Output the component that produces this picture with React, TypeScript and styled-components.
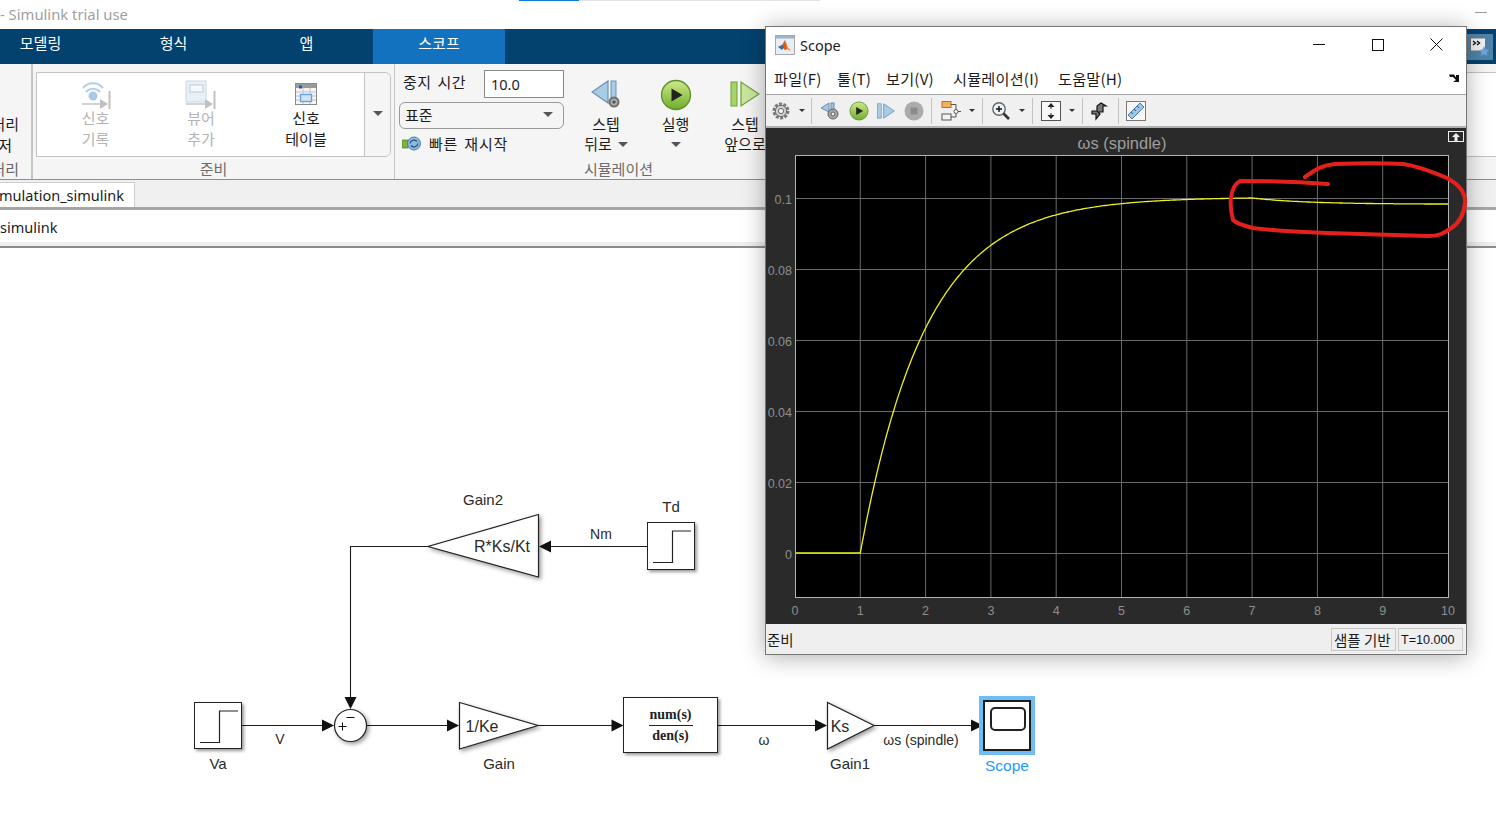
import styled, { createGlobalStyle } from "styled-components";

const KO = `"Noto Sans CJK KR", "Noto Sans", sans-serif`;
const UI = `"Noto Sans", "Noto Sans CJK KR", sans-serif`;
const ARIAL = `"Liberation Sans", Arial, sans-serif`;

const GlobalStyle = createGlobalStyle`
  html, body {
    margin: 0;
    padding: 0;
    background: #ffffff;
    overflow: hidden;
  }
  * { box-sizing: border-box; }
`;

/* ---------- main window ---------- */

const Page = styled.div`
  position: relative;
  width: 1496px;
  height: 822px;
  overflow: hidden;
  display: flex;
  flex-direction: column;
  font-family: ${KO};
  color: #1c1c1c;
`;

const TitleBar = styled.div`
  position: relative;
  flex: 0 0 29px;
  min-height: 0;
  display: flex;
  align-items: center;
  justify-content: space-between;
  background: #fff;
  color: #a0a0a0;
  font-family: ${UI};
  font-size: 14.8px;
  padding: 0 9px 2px 0;
`;

const LoadStrip = styled.div`
  position: absolute;
  left: 519px;
  top: 0;
  width: 301px;
  height: 1px;
  background: linear-gradient(to right, #0a7ad6 60px, #e4e4e4 60px);
`;

const CaptionDash = styled.span`
  width: 12px;
  height: 1px;
  background: #9a9a9a;
  margin-top: -3px;
`;

const TabBar = styled.div`
  flex: 0 0 35px;
  display: flex;
  background: #03426f;
  color: #fff;
  font-size: 15px;
`;

const RibbonTab = styled.div<{ $active?: boolean; $first?: boolean }>`
  width: ${(p) => (p.$active ? 132 : 133)}px;
  margin-left: ${(p) => (p.$first ? -26 : 0)}px;
  display: flex;
  align-items: flex-start;
  justify-content: center;
  padding-top: 3px;
  background: ${(p) => (p.$active ? "#1272bf" : "transparent")};
`;

const TabSpacer = styled.div`
  flex: 1;
`;

const QuickBtn = styled.div`
  width: 26px;
  height: 26px;
  margin: 5px 3px 0 0;
  background: #4f83a8;
  display: flex;
  align-items: center;
  justify-content: center;
`;

const Ribbon = styled.div`
  flex: 0 0 116px;
  min-height: 0;
  display: flex;
  background: #f5f5f5;
  border-bottom: 1px solid #8e8e8e;
`;

const CutSection = styled.div`
  flex: 0 0 33px;
  display: flex;
  flex-direction: column;
  align-items: flex-end;
  overflow: hidden;
  border-right: 2px solid #c4c4c4;
  font-size: 15px;
  line-height: 21px;
  padding-top: 49px;
`;

const CutLine = styled.div<{ $pad: number; $muted?: boolean }>`
  white-space: nowrap;
  padding-right: ${(p) => p.$pad}px;
  margin-top: ${(p) => (p.$muted ? 3 : 0)}px;
  color: ${(p) => (p.$muted ? "#666" : "#1c1c1c")};
`;

const Section = styled.div<{ $w: number }>`
  flex: 0 0 ${(p) => p.$w}px;
  min-height: 0;
  display: flex;
  flex-direction: column;
  border-right: 1px solid #c4c4c4;
`;

const SectionBody = styled.div`
  flex: 0 0 93px;
  display: flex;
`;

const SectionLabel = styled.div`
  flex: 1;
  min-height: 0;
  text-align: center;
  color: #6c6c6c;
  font-size: 15px;
  line-height: 23px;
`;

const Gallery = styled.div`
  margin: 8px 3px 0 3px;
  flex: 1;
  height: 85px;
  display: flex;
  background: #fff;
  border: 1px solid #c3c3c3;
  border-radius: 0 6px 6px 0;
`;

const GalleryItem = styled.div<{ $w: number; $disabled?: boolean }>`
  flex: 0 0 ${(p) => p.$w}px;
  display: flex;
  flex-direction: column;
  align-items: center;
  padding-top: 7px;
  font-size: 15px;
  line-height: 21px;
  color: ${(p) => (p.$disabled ? "#b4b4b4" : "#1c1c1c")};
`;

const GalleryIcon = styled.div`
  height: 27px;
`;

const GalleryMore = styled.div`
  flex: 1;
  border-left: 1px solid #c3c3c3;
  background: #f5f5f5;
  border-radius: 0 6px 6px 0;
  display: flex;
  justify-content: center;
  padding-top: 38px;
`;

const Caret = styled.span<{ $size?: number; $color?: string }>`
  display: inline-block;
  width: 0;
  height: 0;
  border-left: ${(p) => p.$size ?? 5}px solid transparent;
  border-right: ${(p) => p.$size ?? 5}px solid transparent;
  border-top: ${(p) => p.$size ?? 5}px solid ${(p) => p.$color ?? "#555"};
`;

const SimControls = styled.div`
  flex: 0 0 165px;
  margin-left: 4px;
  display: flex;
  flex-direction: column;
`;

const StopRow = styled.div`
  display: flex;
  align-items: flex-start;
  justify-content: space-between;
  height: 28px;
  margin-top: 6px;
  padding-left: 4px;
  font-size: 15px;
  line-height: 24px;
  word-spacing: 2px;
  letter-spacing: 0.5px;
`;

const StopInput = styled.div`
  width: 80px;
  height: 28px;
  background: #fff;
  border: 1px solid #8a8a8a;
  font-family: ${UI};
  font-size: 14.5px;
  line-height: 26px;
  letter-spacing: 0;
  padding-left: 6px;
`;

const ModeSelect = styled.div`
  margin-top: 4px;
  height: 27px;
  border: 1px solid #9a9a9a;
  border-radius: 6px;
  display: flex;
  align-items: center;
  justify-content: space-between;
  padding: 0 10px 3px 5px;
  font-size: 15px;
`;

const FastRestart = styled.div`
  display: flex;
  align-items: center;
  gap: 7px;
  margin: 4px 0 0 3px;
  height: 20px;
  font-size: 15px;
  word-spacing: 2px;
  letter-spacing: 0.8px;
`;

const SimButton = styled.div<{ $w: number }>`
  flex: 0 0 ${(p) => p.$w}px;
  display: flex;
  flex-direction: column;
  align-items: center;
  font-size: 15px;
  line-height: 20px;
  padding-top: 15px;
`;

const SimIcon = styled.div`
  height: 32px;
  margin-bottom: 3px;
`;

const SimLine = styled.div`
  display: flex;
  align-items: center;
  gap: 6px;
  height: 20px;
  white-space: nowrap;
`;

const RibbonRest = styled.div`
  flex: 1;
  padding-top: 8px;
`;

const RestGallery = styled.div`
  height: 85px;
  background: #fff;
  border-top: 1px solid #c3c3c3;
  border-bottom: 1px solid #c3c3c3;
`;

const DocTabs = styled.div`
  flex: 0 0 30px;
  display: flex;
  align-items: flex-end;
  background: #f0f0f0;
  border-bottom: 3px solid #a6a6a6;
`;

const DocTab = styled.div`
  width: 135px;
  height: 25px;
  background: #fff;
  border: 1px solid #cfcfcf;
  border-left: none;
  border-bottom: none;
  overflow: hidden;
  display: flex;
  justify-content: flex-end;
  padding-right: 10px;
  font-family: ${UI};
  font-size: 14.5px;
  line-height: 24px;
  white-space: nowrap;
`;

const Breadcrumb = styled.div`
  flex: 0 0 36px;
  min-height: 0;
  background: #fff;
  border-bottom: 4px solid #efefef;
  font-family: ${UI};
  font-size: 14.5px;
  line-height: 35px;
  white-space: nowrap;
`;

const Canvas = styled.div`
  position: relative;
  flex: 1;
  background: #fff;
  border-top: 2px solid #8c8c8c;
  font-family: ${ARIAL};
`;

/* ---------- diagram, all y values are page y ---------- */

const CANVAS_TOP = 248;

const Wires = styled.svg`
  position: absolute;
  left: 0;
  top: 0;
  width: 1496px;
  height: 574px;
`;

const Block = styled.div<{ $x: number; $y: number; $w: number; $h: number }>`
  position: absolute;
  left: ${(p) => p.$x}px;
  top: ${(p) => p.$y - CANVAS_TOP}px;
  width: ${(p) => p.$w}px;
  height: ${(p) => p.$h}px;
  background: #fff;
  border: 1px solid #222;
  box-shadow: 2px 2px 3px rgba(0, 0, 0, 0.4);
`;

const Fraction = styled(Block)`
  display: flex;
  flex-direction: column;
  align-items: center;
  justify-content: center;
  font-family: "Liberation Serif", serif;
  font-weight: 700;
  font-size: 14px;
  line-height: 18px;
  color: #222;
`;

const Numerator = styled.div`
  width: 44px;
  text-align: center;
  border-bottom: 1px solid #222;
  padding-bottom: 1px;
  margin-bottom: 1px;
`;

const ScopeBlock = styled(Block)`
  border: 2px solid #1b1b1b;
  outline: 4px solid #6fbdf4;
  box-shadow: none;
`;

const ScopeScreen = styled.div`
  position: absolute;
  left: 5px;
  top: 5px;
  width: 36px;
  height: 24px;
  border: 2px solid #222;
  border-radius: 5px;
`;

const Label = styled.div<{ $x: number; $y: number; $blue?: boolean; $size?: number }>`
  position: absolute;
  left: ${(p) => p.$x}px;
  top: ${(p) => p.$y - CANVAS_TOP - 1}px;
  transform: translate(-50%, -50%);
  white-space: nowrap;
  font-size: ${(p) => p.$size ?? 15}px;
  color: ${(p) => (p.$blue ? "#1a9bff" : "#2a2a2a")};
`;

/* ---------- scope window ---------- */

const ScopeWindow = styled.div`
  position: absolute;
  left: 765px;
  top: 26px;
  width: 702px;
  height: 629px;
  display: flex;
  flex-direction: column;
  background: #fff;
  border: 1px solid #767676;
  box-shadow: 0 2px 22px rgba(0, 0, 0, 0.32);
`;

const ScopeTitle = styled.div`
  flex: 0 0 37px;
  display: flex;
  align-items: center;
  padding: 0 0 2px 9px;
  font-family: ${UI};
  font-size: 14.5px;
`;

const ScopeTitleText = styled.span`
  margin-left: 5px;
  flex: 1;
`;

const WinBtn = styled.div`
  width: 59px;
  height: 34px;
  display: flex;
  align-items: center;
  justify-content: center;
`;

const MenuRow = styled.div`
  flex: 0 0 31px;
  min-height: 0;
  display: flex;
  align-items: center;
  padding: 0 6px 3px 8px;
  font-size: 15.2px;
  letter-spacing: 0.2px;
  border-bottom: 1px solid #a8a8a8;
`;

const MenuItem = styled.span<{ $w: number }>`
  flex: 0 0 ${(p) => p.$w}px;
  white-space: nowrap;
`;

const MenuSpacer = styled.div`
  flex: 1;
`;

const Toolbar = styled.div`
  flex: 0 0 33px;
  display: flex;
  align-items: center;
  background: #f0f0f0;
  border-bottom: 2px solid #b0b0b0;
`;

const ToolSlot = styled.div<{ $w: number }>`
  flex: 0 0 ${(p) => p.$w}px;
  display: flex;
  align-items: center;
  justify-content: center;
`;

const ToolSep = styled.div<{ $w?: number }>`
  flex: 0 0 ${(p) => p.$w ?? 8}px;
  height: 26px;
  background: linear-gradient(#c4c4c4, #c4c4c4) center / 1px 100% no-repeat;
`;

const PlotArea = styled.div`
  position: relative;
  flex: 1;
  min-height: 0;
  display: flex;
  flex-direction: column;
  background: #2a2a2a;
`;

const PlotTitle = styled.div`
  flex: 0 0 27px;
  min-height: 0;
  text-align: center;
  padding-left: 12px;
  font-family: ${ARIAL};
  font-size: 16.5px;
  line-height: 31px;
  color: #9e9e9e;
`;

const ExpandBtn = styled.div`
  position: absolute;
  right: 2px;
  top: 3px;
  width: 16px;
  height: 11px;
  border: 1px solid #eee;
  display: flex;
  align-items: center;
  justify-content: center;
`;

const ChartSvg = styled.svg`
  display: block;
  width: 700px;
  height: 469px;
  flex: 0 0 469px;
`;

const TickText = styled.text`
  font-family: ${ARIAL};
  font-size: 12.5px;
  fill: #8e8e8e;
`;

const StatusBar = styled.div`
  flex: 0 0 30px;
  display: flex;
  align-items: center;
  background: #efefef;
  padding: 0 3px 0 1px;
  font-size: 14.5px;
`;

const StatusText = styled.div`
  flex: 1;
`;

const StatusCell = styled.div<{ $mono?: boolean }>`
  width: 65px;
  height: 23px;
  margin-left: 2px;
  border: 1px solid #c6c6c6;
  padding-left: 2px;
  line-height: 22px;
  white-space: nowrap;
  font-family: ${(p) => (p.$mono ? ARIAL : KO)};
  font-size: ${(p) => (p.$mono ? 12.6 : 14.5)}px;
  color: ${(p) => (p.$mono ? "#0c1230" : "#1c1c1c")};
`;

const Annotation = styled.svg`
  position: absolute;
  left: 0;
  top: 0;
  width: 1496px;
  height: 822px;
  pointer-events: none;
`;

/* ---------- chart ---------- */

const xOf = (t: number) => 795 + t * 65.3;
const yOf = (v: number) => 554 - v * 3550;

const response = (t: number) => {
  if (t <= 1) return 0;
  const rise = 0.1 * (1 - Math.exp(-(t - 1) / 1.0));
  if (t <= 7) return rise / 0.9975;
  return 0.1 - 0.00175 * (1 - Math.exp(-(t - 7) * 1.2));
};

const curve = Array.from({ length: 401 }, (_, i) => {
  const t = i / 40;
  return `${xOf(t).toFixed(1)},${(yOf(response(t)) - 1).toFixed(1)}`;
}).join(" ");

const xTicks = [0, 1, 2, 3, 4, 5, 6, 7, 8, 9, 10];
const yTicks = [
  { v: 0, s: "0" },
  { v: 0.02, s: "0.02" },
  { v: 0.04, s: "0.04" },
  { v: 0.06, s: "0.06" },
  { v: 0.08, s: "0.08" },
  { v: 0.1, s: "0.1" },
];

const Chart = () => (
  <ChartSvg viewBox="766 155 700 469">
    <rect x={795} y={155} width={654} height={443} fill="#000" />
    {xTicks.slice(1, 10).map((t) => (
      <line key={t} x1={xOf(t)} x2={xOf(t)} y1={155} y2={597} stroke="#6a6a6a" />
    ))}
    {yTicks.map((tick) => (
      <line key={tick.s} x1={795} x2={1448} y1={yOf(tick.v) - 0.5} y2={yOf(tick.v) - 0.5} stroke="#6a6a6a" />
    ))}
    <polyline points={curve} fill="none" stroke="#f0f020" strokeWidth={1.3} />
    <rect x={795.5} y={155.5} width={653} height={442} fill="none" stroke="#b4b4b4" />
    {xTicks.map((t) => (
      <TickText key={t} x={xOf(t)} y={615} textAnchor="middle">
        {t}
      </TickText>
    ))}
    {yTicks.map((tick) => (
      <TickText key={tick.s} x={792} y={yOf(tick.v) + 5} textAnchor="end">
        {tick.s}
      </TickText>
    ))}
  </ChartSvg>
);

/* ---------- icons ---------- */

const StepSignal = () => (
  <svg width="46" height="46" viewBox="0 0 46 46">
    <path d="M5 39.5H24.5V8H43" fill="none" stroke="#222" strokeWidth="1.2" />
  </svg>
);

const MatlabLogo = () => (
  <svg width="20" height="20" viewBox="0 0 20 20">
    <rect x="0.5" y="0.5" width="19" height="19" fill="#e8eef3" stroke="#a8a8a8" />
    <rect x="1" y="1" width="18" height="2.5" fill="#9fb4c6" />
    <path d="M3 12l4-2 3-5 3 8 3 3-4-2-2 1-3-3z" fill="#e2571e" />
    <path d="M3 12l4-2 2 2-2 3z" fill="#2f6fb3" />
    <path d="M10 5l3 8 3 3-4-2z" fill="#f4a11f" />
  </svg>
);

const SignalLogIcon = () => (
  <svg width="32" height="30" viewBox="0 0 32 30">
    <path d="M3 8a13 13 0 0 1 20 0M6 12a9 9 0 0 1 14 0" fill="none" stroke="#b6cfe6" strokeWidth="2" />
    <circle cx="13" cy="16" r="4.5" fill="#a9c9e6" />
    <path d="M2 24H20" stroke="#c4c4c4" strokeWidth="1.5" />
    <path d="M20 19l8 5-8 5z" fill="#c0c0c0" />
    <path d="M29.5 11V29" stroke="#c0c0c0" strokeWidth="2" />
  </svg>
);

const ViewerIcon = () => (
  <svg width="32" height="30" viewBox="0 0 32 30">
    <rect x="1" y="1" width="20" height="21" fill="#e8f0f7" stroke="#cfd8e0" />
    <rect x="5" y="5" width="13" height="7" fill="#f6fafd" stroke="#b6cbe0" />
    <path d="M1 24H20" stroke="#c4c4c4" strokeWidth="1.5" />
    <path d="M20 19l8 5-8 5z" fill="#c0c0c0" />
    <path d="M29.5 11V29" stroke="#c0c0c0" strokeWidth="2" />
  </svg>
);

const SignalTableIcon = () => (
  <svg width="24" height="26" viewBox="0 -2 24 26">
    <rect x="1.5" y="1.5" width="21" height="21" fill="#f4f4f4" stroke="#8a8a8a" />
    <rect x="2" y="2" width="20" height="4" fill="#9a9a9a" />
    <path d="M2 10H22M2 14H22M2 18H22M9 6V22M16 6V22" stroke="#c2c2c2" />
    <rect x="5" y="3.5" width="3" height="3" fill="#1b5fb4" />
    <rect x="6.5" y="12.5" width="11" height="7" fill="#cfe2f6" stroke="#5fa0e6" strokeWidth="1.3" />
  </svg>
);

const FastRestartIcon = () => (
  <svg width="20" height="15" viewBox="0 0 20 15">
    <rect x="0" y="4" width="6" height="8" fill="#7cb53c" stroke="#4e7d22" strokeWidth="0.7" />
    <circle cx="12" cy="7.5" r="6.5" fill="#8db8dc" stroke="#4f7ea8" />
    <path d="M8 7.5a4 4 0 0 1 7-2M16 7.5a4 4 0 0 1-7 2" fill="none" stroke="#1f4f7c" strokeWidth="1.2" />
  </svg>
);

const StepBackIcon = ({ size = 30 }: { size?: number }) => (
  <svg width={size} height={size} viewBox="0 0 30 30">
    <path d="M17 2v22L1 13z" fill="#a8cbe6" stroke="#6c93b4" strokeWidth="1.2" />
    <rect x="20" y="2" width="5" height="18" fill="#a8cbe6" stroke="#6c93b4" />
    <circle cx="23" cy="23" r="5.5" fill="#6e6e6e" />
    <circle cx="23" cy="23" r="3.5" fill="#ababab" />
    <circle cx="23" cy="23" r="1.6" fill="#4c4c4c" />
  </svg>
);

const RunIcon = ({ size = 32 }: { size?: number }) => (
  <svg width={size} height={size} viewBox="0 0 32 32">
    <defs>
      <linearGradient id="runFill" x1="0" y1="0" x2="0" y2="1">
        <stop offset="0" stopColor="#cfe88a" />
        <stop offset="1" stopColor="#6fae2c" />
      </linearGradient>
    </defs>
    <circle cx="16" cy="16" r="14.5" fill="url(#runFill)" stroke="#5b8f2a" strokeWidth="1.3" />
    <path d="M11.5 9.5L22.5 16 11.5 22.5z" fill="#222" />
  </svg>
);

const StepForwardIcon = ({ size = 30, green = true }: { size?: number; green?: boolean }) => (
  <svg width={size} height={size} viewBox="0 0 30 30">
    <rect x="1" y="3" width="6" height="24" fill={green ? "#a6d468" : "#a8cbe6"} stroke={green ? "#6ea03a" : "#5f8cb4"} />
    <path d="M11 3v24l18-12z" fill={green ? "#c9e69a" : "#a8cbe6"} stroke={green ? "#6ea03a" : "#5f8cb4"} strokeWidth="1.2" />
  </svg>
);

const GearIcon = () => (
  <svg width="20" height="20" viewBox="0 0 20 20">
    <circle cx="10" cy="10" r="7" fill="none" stroke="#7a7a7a" strokeWidth="3" strokeDasharray="3 1.4" />
    <circle cx="10" cy="10" r="5.6" fill="#d0d0d0" stroke="#6a6a6a" />
    <circle cx="10" cy="10" r="2.6" fill="#f0f0f0" stroke="#6a6a6a" />
  </svg>
);

const RewindGearIcon = () => (
  <svg width="20" height="20" viewBox="0 0 20 20">
    <path d="M9 2v9L1 7z" fill="#a8c6e0" stroke="#6a8cae" />
    <rect x="11" y="2" width="3" height="7" fill="#a8c6e0" stroke="#6a8cae" />
    <circle cx="13" cy="13" r="5" fill="#a8a8a8" stroke="#5e5e5e" />
    <circle cx="13" cy="13" r="2" fill="#efefef" stroke="#5e5e5e" />
  </svg>
);

const StopIcon = () => (
  <svg width="20" height="20" viewBox="0 0 20 20">
    <circle cx="10" cy="10" r="9.5" fill="#ababab" />
    <rect x="6.5" y="6.5" width="7" height="7" fill="#8b8b8b" />
  </svg>
);

const BlocksIcon = () => (
  <svg width="22" height="22" viewBox="0 0 22 22">
    <rect x="3" y="1.5" width="9" height="6" fill="#f1b35c" stroke="#c76a12" />
    <rect x="3" y="14" width="9" height="6" fill="#f4f4f4" stroke="#555" />
    <path d="M12 4.5H17V10M12 17H17V13" fill="none" stroke="#555" />
    <circle cx="17" cy="11.5" r="2" fill="#fff" stroke="#555" />
    <path d="M19 11.5H22" stroke="#555" />
  </svg>
);

const ZoomIcon = () => (
  <svg width="20" height="20" viewBox="0 0 20 20">
    <circle cx="8" cy="8" r="6.2" fill="#eef3f8" stroke="#666" strokeWidth="1.4" />
    <path d="M5 8h6M8 5v6" stroke="#111" strokeWidth="1.4" />
    <path d="M12.5 12.5L18 18" stroke="#333" strokeWidth="2.6" />
  </svg>
);

const FitIcon = () => (
  <svg width="20" height="20" viewBox="0 0 20 20">
    <rect x="0.5" y="0.5" width="19" height="19" fill="#f8f8f8" stroke="#555" />
    <path d="M10 2l3.5 4h-7zM10 18l3.5-4h-7z" fill="#222" />
    <path d="M10 6v2M10 12v2" stroke="#222" />
  </svg>
);

const SignalEdgeIcon = () => (
  <svg width="20" height="20" viewBox="0 0 20 20">
    <path d="M2 10h5V5l4-3 5 3h-3v6H8l2 2-4 5 0-5H2z" fill="#777" stroke="#111" strokeWidth="1.2" />
  </svg>
);

const RulerIcon = () => (
  <svg width="20" height="20" viewBox="0 0 20 20">
    <rect x="0.5" y="0.5" width="19" height="19" fill="#f7f7f7" stroke="#777" />
    <path d="M2 14L14 2l4 4L6 18z" fill="#9cc4e6" stroke="#4f7ea8" />
    <path d="M5 11l2 2M8 8l2 2M11 5l2 2" stroke="#2f5f8c" />
  </svg>
);

const UndockArrow = () => (
  <svg width="12" height="10" viewBox="0 0 12 10">
    <path d="M1 1.5h5l2 3V2l3 0v7H5l3-2-3-3H2z" fill="#111" />
  </svg>
);

const ExpandArrow = () => (
  <svg width="10" height="8" viewBox="0 0 10 8">
    <path d="M5 0l4 4H6.5v4h-3V4H1z" fill="#eee" />
  </svg>
);

const QuickIcon = () => (
  <svg width="20" height="20" viewBox="0 0 20 20">
    <rect x="0.5" y="1" width="15" height="13" fill="#eef2f5" stroke="#777" />
    <path d="M3 4l2.5 2L3 8M7 4l2.5 2L7 8" fill="none" stroke="#111" strokeWidth="1.4" />
    <path d="M14 9l1.6 3.4 3.6.5-2.6 2.5.6 3.6-3.2-1.7-3.2 1.7.6-3.6-2.6-2.5 3.6-.5z" fill="#6ea6d8" />
  </svg>
);

const Arrow = ({ d }: { d: string }) => <path d={d} fill="#111" />;

const Wiring = () => (
  <Wires viewBox={`0 ${CANVAS_TOP} 1496 574`}>
    <g fill="none" stroke="#1a1a1a" strokeWidth="1.1">
      <path d="M647 546.5H550" />
      <path d="M428 546.5H350.5V698" />
      <path d="M242 725.5H324" />
      <path d="M367 725.5H450" />
      <path d="M538 725.5H614" />
      <path d="M718 725.5H817" />
      <path d="M874 725.5H973" />
    </g>
    <Arrow d="M539 546.5l12-6v12z" />
    <Arrow d="M350.5 709l-6-12h12z" />
    <Arrow d="M334 725.5l-12-6v12z" />
    <Arrow d="M459 725.5l-12-6v12z" />
    <Arrow d="M623.5 725.5l-12-6v12z" />
    <Arrow d="M827 725.5l-12-6v12z" />
    <Arrow d="M983 725.5l-12-6v12z" />
    <g fill="#fff" stroke="#222" strokeWidth="1.2" style={{ filter: "drop-shadow(2px 2px 2px rgba(0,0,0,.4))" }}>
      <path d="M538.5 514.5V577L428 546.5z" />
      <path d="M459.5 702.5V749L538 725.5z" />
      <path d="M827.5 702.5V749L874 725.5z" />
      <circle cx="350.5" cy="725.5" r="16" />
    </g>
    <path d="M338.5 726.5h8M342.5 722.5v8M346.5 717.5h8" stroke="#111" strokeWidth="1" />
  </Wires>
);

const App = () => (
  <Page>
    <GlobalStyle />
    <TitleBar>
      <LoadStrip />
      <span>- Simulink trial use</span>
      <CaptionDash />
    </TitleBar>
    <TabBar>
      <RibbonTab $first>모델링</RibbonTab>
      <RibbonTab>형식</RibbonTab>
      <RibbonTab>앱</RibbonTab>
      <RibbonTab $active>스코프</RibbonTab>
      <TabSpacer />
      <QuickBtn>
        <QuickIcon />
      </QuickBtn>
    </TabBar>
    <Ribbon>
      <CutSection>
        <CutLine $pad={12}>처리</CutLine>
        <CutLine $pad={19}>저</CutLine>
        <CutLine $pad={12} $muted>
          처리
        </CutLine>
      </CutSection>
      <Section $w={362}>
        <SectionBody>
          <Gallery>
            <GalleryItem $w={117} $disabled>
              <GalleryIcon>
                <SignalLogIcon />
              </GalleryIcon>
              <span>신호</span>
              <span>기록</span>
            </GalleryItem>
            <GalleryItem $w={94} $disabled>
              <GalleryIcon>
                <ViewerIcon />
              </GalleryIcon>
              <span>뷰어</span>
              <span>추가</span>
            </GalleryItem>
            <GalleryItem $w={116}>
              <GalleryIcon>
                <SignalTableIcon />
              </GalleryIcon>
              <span>신호</span>
              <span>테이블</span>
            </GalleryItem>
            <GalleryMore>
              <Caret />
            </GalleryMore>
          </Gallery>
        </SectionBody>
        <SectionLabel>준비</SectionLabel>
      </Section>
      <Section $w={448}>
        <SectionBody>
          <SimControls>
            <StopRow>
              <span>중지 시간</span>
              <StopInput>10.0</StopInput>
            </StopRow>
            <ModeSelect>
              <span>표준</span>
              <Caret />
            </ModeSelect>
            <FastRestart>
              <FastRestartIcon />
              <span>빠른 재시작</span>
            </FastRestart>
          </SimControls>
          <SimButton $w={84}>
            <SimIcon>
              <StepBackIcon />
            </SimIcon>
            <span>스텝</span>
            <SimLine>
              뒤로 <Caret />
            </SimLine>
          </SimButton>
          <SimButton $w={55}>
            <SimIcon>
              <RunIcon />
            </SimIcon>
            <span>실행</span>
            <SimLine>
              <Caret />
            </SimLine>
          </SimButton>
          <SimButton $w={84}>
            <SimIcon>
              <StepForwardIcon />
            </SimIcon>
            <span>스텝</span>
            <SimLine>앞으로</SimLine>
          </SimButton>
        </SectionBody>
        <SectionLabel>시뮬레이션</SectionLabel>
      </Section>
      <RibbonRest>
        <RestGallery />
      </RibbonRest>
    </Ribbon>
    <DocTabs>
      <DocTab>motor_simulation_simulink</DocTab>
    </DocTabs>
    <Breadcrumb>simulink</Breadcrumb>
    <Canvas>
      <Wiring />
      <Block $x={647} $y={522} $w={48} $h={48}>
        <StepSignal />
      </Block>
      <Block $x={194} $y={702} $w={48} $h={47}>
        <StepSignal />
      </Block>
      <Fraction $x={623} $y={697} $w={95} $h={56}>
        <Numerator>num(s)</Numerator>
        <div>den(s)</div>
      </Fraction>
      <ScopeBlock $x={983} $y={700} $w={48} $h={51}>
        <ScopeScreen />
      </ScopeBlock>
      <Label $x={483} $y={500}>Gain2</Label>
      <Label $x={671} $y={507}>Td</Label>
      <Label $x={601} $y={535} $size={14}>Nm</Label>
      <Label $x={502} $y={548} $size={16}>R*Ks/Kt</Label>
      <Label $x={280} $y={740} $size={14}>V</Label>
      <Label $x={218} $y={764}>Va</Label>
      <Label $x={482} $y={728} $size={16}>1/Ke</Label>
      <Label $x={499} $y={764}>Gain</Label>
      <Label $x={764} $y={741} $size={14}>ω</Label>
      <Label $x={840} $y={728} $size={16}>Ks</Label>
      <Label $x={850} $y={764}>Gain1</Label>
      <Label $x={921} $y={741} $size={14}>ωs (spindle)</Label>
      <Label $x={1007} $y={767} $blue $size={15.5}>Scope</Label>
    </Canvas>
    <ScopeWindow>
      <ScopeTitle>
        <MatlabLogo />
        <ScopeTitleText>Scope</ScopeTitleText>
        <WinBtn>
          <svg width="12" height="12" viewBox="0 0 12 12">
            <path d="M0 5.5H12" stroke="#111" />
          </svg>
        </WinBtn>
        <WinBtn>
          <svg width="12" height="12" viewBox="0 0 12 12">
            <rect x="0.5" y="0.5" width="11" height="11" fill="none" stroke="#111" />
          </svg>
        </WinBtn>
        <WinBtn>
          <svg width="13" height="13" viewBox="0 0 13 13">
            <path d="M0.5 0.5L12.5 12.5M12.5 0.5L0.5 12.5" stroke="#111" />
          </svg>
        </WinBtn>
      </ScopeTitle>
      <MenuRow>
        <MenuItem $w={63}>파일(F)</MenuItem>
        <MenuItem $w={49}>툴(T)</MenuItem>
        <MenuItem $w={67}>보기(V)</MenuItem>
        <MenuItem $w={105}>시뮬레이션(I)</MenuItem>
        <MenuItem $w={70}>도움말(H)</MenuItem>
        <MenuSpacer />
        <UndockArrow />
      </MenuRow>
      <Toolbar>
        <ToolSlot $w={30}><GearIcon /></ToolSlot>
        <ToolSlot $w={12}><Caret $size={3} $color="#333" /></ToolSlot>
        <ToolSep $w={6} />
        <ToolSlot $w={31}><RewindGearIcon /></ToolSlot>
        <ToolSlot $w={27}><RunIcon size={20} /></ToolSlot>
        <ToolSlot $w={28}><StepForwardIcon size={18} green={false} /></ToolSlot>
        <ToolSlot $w={28}><StopIcon /></ToolSlot>
        <ToolSep $w={6} />
        <ToolSlot $w={32}><BlocksIcon /></ToolSlot>
        <ToolSlot $w={12}><Caret $size={3} $color="#333" /></ToolSlot>
        <ToolSep />
        <ToolSlot $w={30}><ZoomIcon /></ToolSlot>
        <ToolSlot $w={12}><Caret $size={3} $color="#333" /></ToolSlot>
        <ToolSep />
        <ToolSlot $w={30}><FitIcon /></ToolSlot>
        <ToolSlot $w={12}><Caret $size={3} $color="#333" /></ToolSlot>
        <ToolSep />
        <ToolSlot $w={28}><SignalEdgeIcon /></ToolSlot>
        <ToolSep />
        <ToolSlot $w={28}><RulerIcon /></ToolSlot>
      </Toolbar>
      <PlotArea>
        <PlotTitle>ωs (spindle)</PlotTitle>
        <ExpandBtn>
          <ExpandArrow />
        </ExpandBtn>
        <Chart />
      </PlotArea>
      <StatusBar>
        <StatusText>준비</StatusText>
        <StatusCell>샘플 기반</StatusCell>
        <StatusCell $mono>T=10.000</StatusCell>
      </StatusBar>
    </ScopeWindow>
    <Annotation viewBox="0 0 1496 822">
      <path
        d="M1305 177C1315 170 1322 165 1335 164C1360 163 1385 163 1403 164C1418 166 1435 173 1447 178C1458 184 1466 192 1465 203C1464 215 1458 224 1450 229C1443 234 1438 236 1428 236C1395 235 1360 234 1327 233C1300 232 1275 231 1253 228C1245 226 1237 224 1233 220C1231 212 1230 205 1231 198C1232 190 1234 184 1240 181C1268 181 1300 182 1328 184"
        fill="none"
        stroke="#e3201b"
        strokeWidth="4"
        strokeLinecap="round"
        strokeLinejoin="round"
      />
    </Annotation>
  </Page>
);

export default App;
